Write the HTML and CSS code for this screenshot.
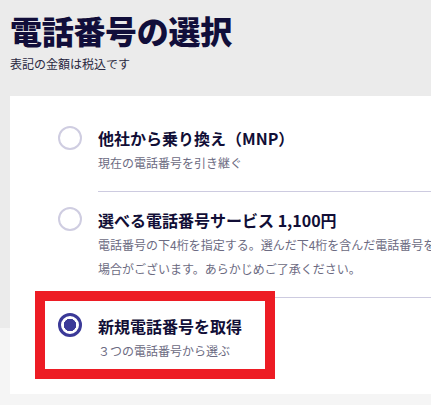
FILE: index.html
```html
<!DOCTYPE html>
<html lang="ja">
<head>
<meta charset="utf-8">
<title>電話番号の選択</title>
<link rel="stylesheet" href="styles.css">
</head>
<body>
<main class="page">
  <header class="page-head">
    <h1 class="page-title">電話番号の選択</h1>
    <p class="page-note">表記の金額は税込です</p>
  </header>
  <section class="card">
    <div class="option">
      <span class="radio"></span>
      <div class="option-body">
        <div class="option-title">他社から乗り換え（MNP）</div>
        <div class="option-desc">現在の電話番号を引き継ぐ</div>
      </div>
    </div>
    <div class="option">
      <span class="radio"></span>
      <div class="option-body divided">
        <div class="option-title">選べる電話番号サービス 1,100円</div>
        <div class="option-desc">電話番号の下4桁を指定する。選んだ下4桁を含んだ電話番号をご用意できない<br>場合がございます。あらかじめご了承ください。</div>
      </div>
    </div>
    <div class="option is-selected">
      <span class="radio checked"></span>
      <div class="option-body divided">
        <div class="option-title">新規電話番号を取得</div>
        <div class="option-desc">３つの電話番号から選ぶ</div>
      </div>
      <span class="highlight"></span>
    </div>
  </section>
</main>
</body>
</html>
```
FILE: styles.css
```css
html, body {
  margin: 0;
  padding: 0;
  overflow: hidden;
}
body {
  background: linear-gradient(#ebebeb 0, #ebebeb 328px, #f5f5f5 328px);
  min-height: 405px;
  font-family: "Noto Sans CJK JP", "Noto Sans", sans-serif;
  color: #14123a;
}
.page {
  padding-left: 10px;
}
.page-head {
  padding-top: 10px;
}
.page-title {
  margin: 0;
  font-size: 32px;
  line-height: 40px;
  font-weight: 900;
  letter-spacing: -0.3px;
  color: #110e3a;
}
.page-note {
  margin: 5px 0 0;
  font-size: 12px;
  line-height: 18px;
  color: #2a2840;
}
.card {
  margin-top: 23px;
  width: 540px;
  background: #fff;
  padding: 14px 0 15px 48px;
  box-sizing: border-box;
}
.option {
  position: relative;
  display: flex;
  gap: 16px;
}
.radio {
  flex: 0 0 auto;
  width: 24px;
  height: 24px;
  box-sizing: border-box;
  border: 2px solid #cfcde1;
  border-radius: 50%;
  margin-top: 16px;
  background: #fff;
}
.radio.checked {
  border: 3px solid #3b3a98;
  background: radial-gradient(circle, #3b3a98 0, #3b3a98 6px, #fff 6.5px);
}
.option-body {
  flex: 1;
  padding: 16px 0;
}
.option-body.divided {
  border-top: 1px solid #cdcbe0;
}
.option-title {
  font-size: 16px;
  line-height: 25px;
  font-weight: 700;
  color: #110e36;
}
.option-desc {
  font-size: 12px;
  line-height: 24px;
  color: #6c6b82;
  white-space: nowrap;
}
.highlight {
  position: absolute;
  left: -23px;
  top: -6px;
  width: 240px;
  height: 88px;
  box-sizing: border-box;
  border: 10px solid #ed1c24;
  pointer-events: none;
}
```
